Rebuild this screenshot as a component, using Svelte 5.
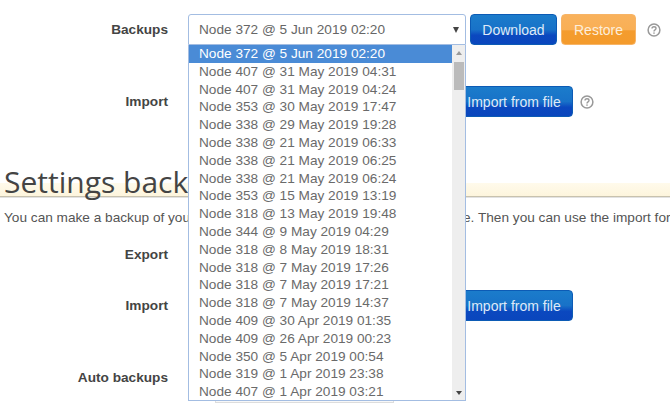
<script>
  const backups = [
    'Node 372 @ 5 Jun 2019 02:20',
    'Node 407 @ 31 May 2019 04:31',
    'Node 407 @ 31 May 2019 04:24',
    'Node 353 @ 30 May 2019 17:47',
    'Node 338 @ 29 May 2019 19:28',
    'Node 338 @ 21 May 2019 06:33',
    'Node 338 @ 21 May 2019 06:25',
    'Node 338 @ 21 May 2019 06:24',
    'Node 353 @ 15 May 2019 13:19',
    'Node 318 @ 13 May 2019 19:48',
    'Node 344 @ 9 May 2019 04:29',
    'Node 318 @ 8 May 2019 18:31',
    'Node 318 @ 7 May 2019 17:26',
    'Node 318 @ 7 May 2019 17:21',
    'Node 318 @ 7 May 2019 14:37',
    'Node 409 @ 30 Apr 2019 01:35',
    'Node 409 @ 26 Apr 2019 00:23',
    'Node 350 @ 5 Apr 2019 00:54',
    'Node 319 @ 1 Apr 2019 23:38',
    'Node 407 @ 1 Apr 2019 03:21'
  ];
</script>

{#snippet help()}
  <svg class="help" width="14" height="14" viewBox="0 0 14 14" aria-hidden="true">
    <circle cx="7" cy="7" r="5.9" fill="none" stroke="#999" stroke-width="1.5" />
    <path d="M5 5.5c0-1.2 1-1.8 2-1.8s2 .6 2 1.700c0 1.500-2 1.400-2 3" fill="none" stroke="#999" stroke-width="1.400" />
    <rect x="6.300" y="9.400" width="1.400" height="1.400" fill="#999" />
  </svg>
{/snippet}

<div class="page">
  <div class="row first">
    <div class="label">Backups</div>
    <div class="controls">
      <div class="select-wrap">
        <div class="select open">
          <span>{backups[0]}</span>
          <span class="caret"></span>
        </div>
        <div class="dropdown">
          <ul>
            {#each backups as item, i}
              <li class:selected={i === 0}>{item}</li>
            {/each}
          </ul>
          <div class="scrollbar">
            <span class="arrow up"></span>
            <span class="thumb"></span>
            <span class="arrow down"></span>
          </div>
        </div>
      </div>
      <button class="btn blue">Download</button>
      <button class="btn orange">Restore</button>
      {@render help()}
    </div>
  </div>

  <div class="row import-one">
    <div class="label">Import</div>
    <div class="controls">
      <div class="file-spacer"></div>
      <button class="btn blue file">Import from file</button>
      {@render help()}
    </div>
  </div>

  <h2>Settings backup</h2>
  <p class="intro">You can make a backup of your current settings and download it to a local file. Then you can use the import for restoring them.</p>

  <div class="row export">
    <div class="label">Export</div>
  </div>

  <div class="row import-two">
    <div class="label">Import</div>
    <div class="controls">
      <div class="file-spacer"></div>
      <button class="btn blue file">Import from file</button>
    </div>
  </div>

  <div class="row auto">
    <div class="label">Auto backups</div>
  </div>
  <div class="below"></div>
</div>

<style>
  :global(body) {
    margin: 0;
    background: #fff;
    overflow: hidden;
  }

  .page {
    width: 670px;
    height: 408px;
    overflow: hidden;
    font-family: "Liberation Sans", Arial, sans-serif;
    font-size: 13.65px;
    color: #555;
    padding-top: 14px;
    box-sizing: border-box;
    white-space: nowrap;
  }

  .row {
    display: flex;
    align-items: center;
    gap: 20px;
  }

  .label {
    width: 168px;
    flex: none;
    text-align: right;
    font-weight: bold;
    color: #444;
  }

  .controls {
    display: flex;
    align-items: center;
    gap: 4px;
  }

  .select-wrap {
    position: relative;
    width: 278px;
  }

  .select {
    height: 31px;
    box-sizing: border-box;
    border: 1px solid #a3bde2;
    border-radius: 3px 3px 0 0;
    background: #fff;
    display: flex;
    align-items: center;
    justify-content: space-between;
    padding: 0 6px 0 10px;
    color: #666;
  }

  .caret {
    width: 0;
    height: 0;
    border-left: 3px solid transparent;
    border-right: 3px solid transparent;
    border-top: 6px solid #444;
  }

  .dropdown {
    position: absolute;
    z-index: 2;
    left: 0;
    top: 31px;
    width: 278px;
    height: 356px;
    box-sizing: border-box;
    border: 1px solid #a3bde2;
    border-top: none;
    background: #fff;
    display: flex;
  }

  ul {
    list-style: none;
    margin: 0;
    padding: 0;
    flex: 1;
    color: #6a6a6a;
  }

  li {
    height: 17.8px;
    line-height: 18px;
    padding-left: 10px;
  }

  li.selected {
    background: #4a8bd6;
    color: #fff;
  }

  .scrollbar {
    width: 13px;
    background: #eee;
    display: flex;
    flex-direction: column;
    align-items: center;
    position: relative;
  }

  .thumb {
    width: 10px;
    height: 28px;
    margin-top: 7px;
    background: #bbb;
  }

  .arrow {
    width: 0;
    height: 0;
    border-left: 3px solid transparent;
    border-right: 3px solid transparent;
  }

  .arrow.up {
    border-bottom: 4px solid #999;
    margin-top: 6px;
  }

  .arrow.down {
    border-top: 4px solid #444;
    position: absolute;
    bottom: 5px;
  }

  .btn {
    height: 31px;
    box-sizing: border-box;
    border-radius: 4px;
    font-family: inherit;
    font-size: 14px;
    color: #dfe9f8;
    padding: 0;
    margin: 0;
    cursor: pointer;
  }

  .blue {
    border: 1px solid #0c5bb5;
    background: linear-gradient(#1b7ccb 0%, #1872c8 50%, #0b48bf 70%, #0a46bd 100%);
    width: 87px;
  }

  .orange {
    border: 1px solid #f7b466;
    background: linear-gradient(#f9b25c 0%, #f9af55 50%, #f49c2e 55%, #f49b2c 100%);
    color: #fdeedb;
    width: 75px;
  }

  .help {
    margin-left: 7px;
  }

  .import-one {
    margin-top: 41px;
  }

  .file-spacer {
    width: 263px;
  }

  .btn.file {
    width: 118px;
  }

  .import-one .help {
    margin-left: 3px;
  }

  h2 {
    margin: 39px 0 0;
    height: 42px;
    box-sizing: border-box;
    border-bottom: 1px solid #e2e2e2;
    background: linear-gradient(transparent 27px, #fffaeb 27px, #fdf5dd calc(100% - 1px), #c8c2ae calc(100% - 1px));
    font-family: "Open Sans", sans-serif;
    font-weight: normal;
    font-size: 30px;
    line-height: 51px;
    color: #444;
    padding-left: 4px;
  }

  .intro {
    margin: 11px 0 0;
    padding-left: 4px;
    line-height: 18px;
    color: #555;
  }

  .export {
    margin-top: 18px;
    height: 18px;
  }

  .import-two {
    margin-top: 27px;
  }

  .auto {
    margin-top: 47px;
    height: 18px;
  }

  .below {
    margin: 5px 0 0 215px;
    width: 177px;
    height: 10px;
    border: 1px solid #ddd;
    background: #f8f8f8;
  }
</style>
